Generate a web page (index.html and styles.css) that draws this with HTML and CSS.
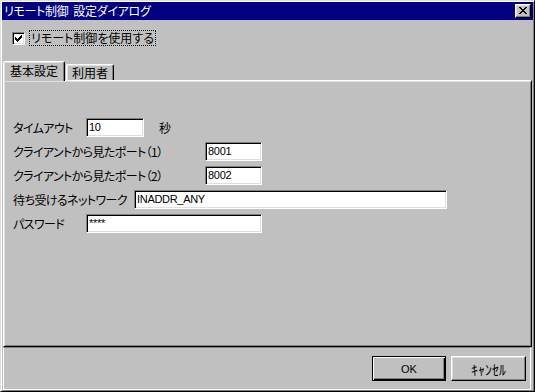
FILE: index.html
```html
<!DOCTYPE html>
<html lang="ja">
<head>
<meta charset="utf-8">
<title>リモート制御 設定ダイアログ</title>
<link rel="stylesheet" href="styles.css">
</head>
<body>
<div class="window">
  <div class="titlebar">
    <span class="title">リモート制御  設定ダイアログ</span>
    <span class="close">
      <svg width="8" height="7" viewBox="0 0 8 7" shape-rendering="crispEdges"><path d="M0 0h2v1h-2zM6 0h2v1h-2zM1 1h2v1h-2zM5 1h2v1h-2zM2 2h4v1h-4zM3 3h2v1h-2zM2 4h4v1h-4zM1 5h2v1h-2zM5 5h2v1h-2zM0 6h2v1h-2zM6 6h2v1h-2z" fill="#000"/></svg>
    </span>
  </div>
  <div class="client">
    <div class="checkrow">
      <span class="checkbox">
        <svg width="7" height="7" viewBox="0 0 7 7" shape-rendering="crispEdges"><path d="M6 0h1v3h-1zM5 1h1v3h-1zM4 2h1v3h-1zM3 3h1v3h-1zM2 4h1v3h-1zM1 3h1v3h-1zM0 2h1v3h-1z" fill="#000"/></svg>
      </span>
      <span class="checklabel">リモート制御を使用する</span>
    </div>
    <div class="tabs">
      <div class="tab tab-active">基本設定</div>
      <div class="tab">利用者</div>
    </div>
    <div class="panel">
      <div class="row">
        <span class="label label-short">タイムアウト</span>
        <span class="field field-timeout">10</span>
        <span class="unit">秒</span>
      </div>
      <div class="row">
        <span class="label label-long">クライアントから見たポート（1）</span>
        <span class="field field-port">8001</span>
      </div>
      <div class="row">
        <span class="label label-long">クライアントから見たポート（2）</span>
        <span class="field field-port">8002</span>
      </div>
      <div class="row">
        <span class="label label-mid">待ち受けるネットワーク</span>
        <span class="field field-net">INADDR_ANY</span>
      </div>
      <div class="row">
        <span class="label label-short">パスワード</span>
        <span class="field field-pass">****</span>
      </div>
    </div>
    <div class="footer">
      <span class="btn btn-default">OK</span>
      <span class="btn btn-cancel">ｷｬﾝｾﾙ</span>
    </div>
  </div>
</div>
</body>
</html>
```
FILE: styles.css
```css
* { box-sizing: border-box; }
html, body { margin: 0; padding: 0; }
body {
  width: 535px;
  height: 392px;
  background: #c0c0c0;
  font-family: "Noto Sans CJK JP", sans-serif;
  font-size: 11px;
  font-feature-settings: "palt";
  color: #000;
}
.window {
  width: 535px;
  height: 392px;
  display: flex;
  flex-direction: column;
  background: #c0c0c0;
  border: 1px solid;
  border-color: #dfdfdf #000 #000 #dfdfdf;
  box-shadow: inset 1px 1px #fff, inset -1px -1px #808080;
  padding: 1px;
}
.titlebar {
  height: 18px;
  flex: none;
  background: #000080;
  display: flex;
  align-items: center;
  justify-content: space-between;
  padding: 0 2px 0 2px;
}
.title {
  color: #fff;
  font-size: 12px;
  line-height: 14px;
  white-space: pre;
  letter-spacing: -0.3px;
}
.close {
  width: 16px;
  height: 14px;
  background: #c0c0c0;
  border: 1px solid;
  border-color: #fff #000 #000 #fff;
  box-shadow: inset -1px -1px #808080, inset 1px 1px #dfdfdf;
  display: flex;
  align-items: center;
  justify-content: center;
  padding: 0 1px 1px 0;
}
.close svg { display: block; }
.client {
  flex: 1;
  display: flex;
  flex-direction: column;
}
.checkrow {
  display: flex;
  align-items: center;
  height: 16px;
  margin: 10px 0 0 10px;
}
.checkbox {
  width: 13px;
  height: 13px;
  background: #fff;
  border: 1px solid;
  border-color: #808080 #fff #fff #808080;
  box-shadow: inset 1px 1px #000, inset -1px -1px #dfdfdf;
  display: flex;
  align-items: center;
  justify-content: center;
}
.checkbox svg { display: block; }
.checklabel {
  margin-left: 4px;
  height: 16px;
  font-size: 12px;
  line-height: 14px;
  padding: 0 1px;
  border: 1px dotted #000;
}
.tabs {
  display: flex;
  align-items: flex-end;
  height: 20px;
  margin: 15px 0 -1px 1px;
  position: relative;
  z-index: 1;
}
.tab {
  height: 16px;
  margin: 0 0 1px 1px;
  width: 48px;
  border: 1px solid;
  border-bottom: 0;
  border-color: #fff #000 transparent #fff;
  border-radius: 2px 2px 0 0;
  box-shadow: inset -1px 0 #808080, inset 1px 1px #dfdfdf;
  display: flex;
  align-items: center;
  justify-content: center;
  font-size: 12px;
  line-height: 14px;
}
.tab-active {
  height: 20px;
  width: 62px;
  margin: 0;
  background: #c0c0c0;
  padding-bottom: 2px;
}
.panel {
  height: 267px;
  flex: none;
  margin: 0 1px;
  border: 1px solid;
  border-color: #fff #000 #000 #fff;
  box-shadow: inset 1px 1px #dfdfdf, inset -1px -1px #808080;
  padding: 37px 0 0 9px;
  display: flex;
  flex-direction: column;
  gap: 5px;
}
.row {
  display: flex;
  align-items: center;
  height: 19px;
}
.label {
  flex: none;
  font-size: 12px;
  letter-spacing: -0.6px;
  line-height: 14px;
}
.label-short { width: 73px; }
.label-mid { width: 121px; }
.label-long { width: 192px; }
.field {
  height: 19px;
  background: #fff;
  border: 1px solid;
  border-color: #808080 #fff #fff #808080;
  box-shadow: inset 1px 1px #000, inset -1px -1px #dfdfdf;
  padding: 2px 0 0 2px;
  font-family: "Liberation Sans", sans-serif;
  font-size: 11px;
  line-height: 13px;
  letter-spacing: -0.3px;
}
.field-timeout { width: 58px; }
.field-port { width: 57px; }
.field-net { width: 313px; }
.field-pass { width: 176px; }
.unit { margin-left: 15px; font-size: 12px; line-height: 14px; }
.footer {
  flex: 1;
  margin: 0 2px 0 1px;
  border: 1px solid #fff;
  border-top-color: #808080;
  display: flex;
  justify-content: flex-end;
  align-items: flex-start;
  gap: 5px;
  padding: 8px 4px 0 0;
}
.btn {
  width: 75px;
  height: 25px;
  background: #c0c0c0;
  border: 1px solid;
  border-color: #fff #000 #000 #fff;
  box-shadow: inset -1px -1px #808080, inset 1px 1px #dfdfdf;
  display: flex;
  align-items: center;
  justify-content: center;
  line-height: 14px;
}
.btn-cancel {
  font-size: 14px;
  font-feature-settings: normal;
  letter-spacing: 0;
}
.btn-default {
  width: 74px;
  border-color: #000;
  box-shadow: inset 1px 1px #fff, inset -1px -1px #000, inset -2px -2px #808080;
  font-family: "Liberation Sans", sans-serif;
}
```
